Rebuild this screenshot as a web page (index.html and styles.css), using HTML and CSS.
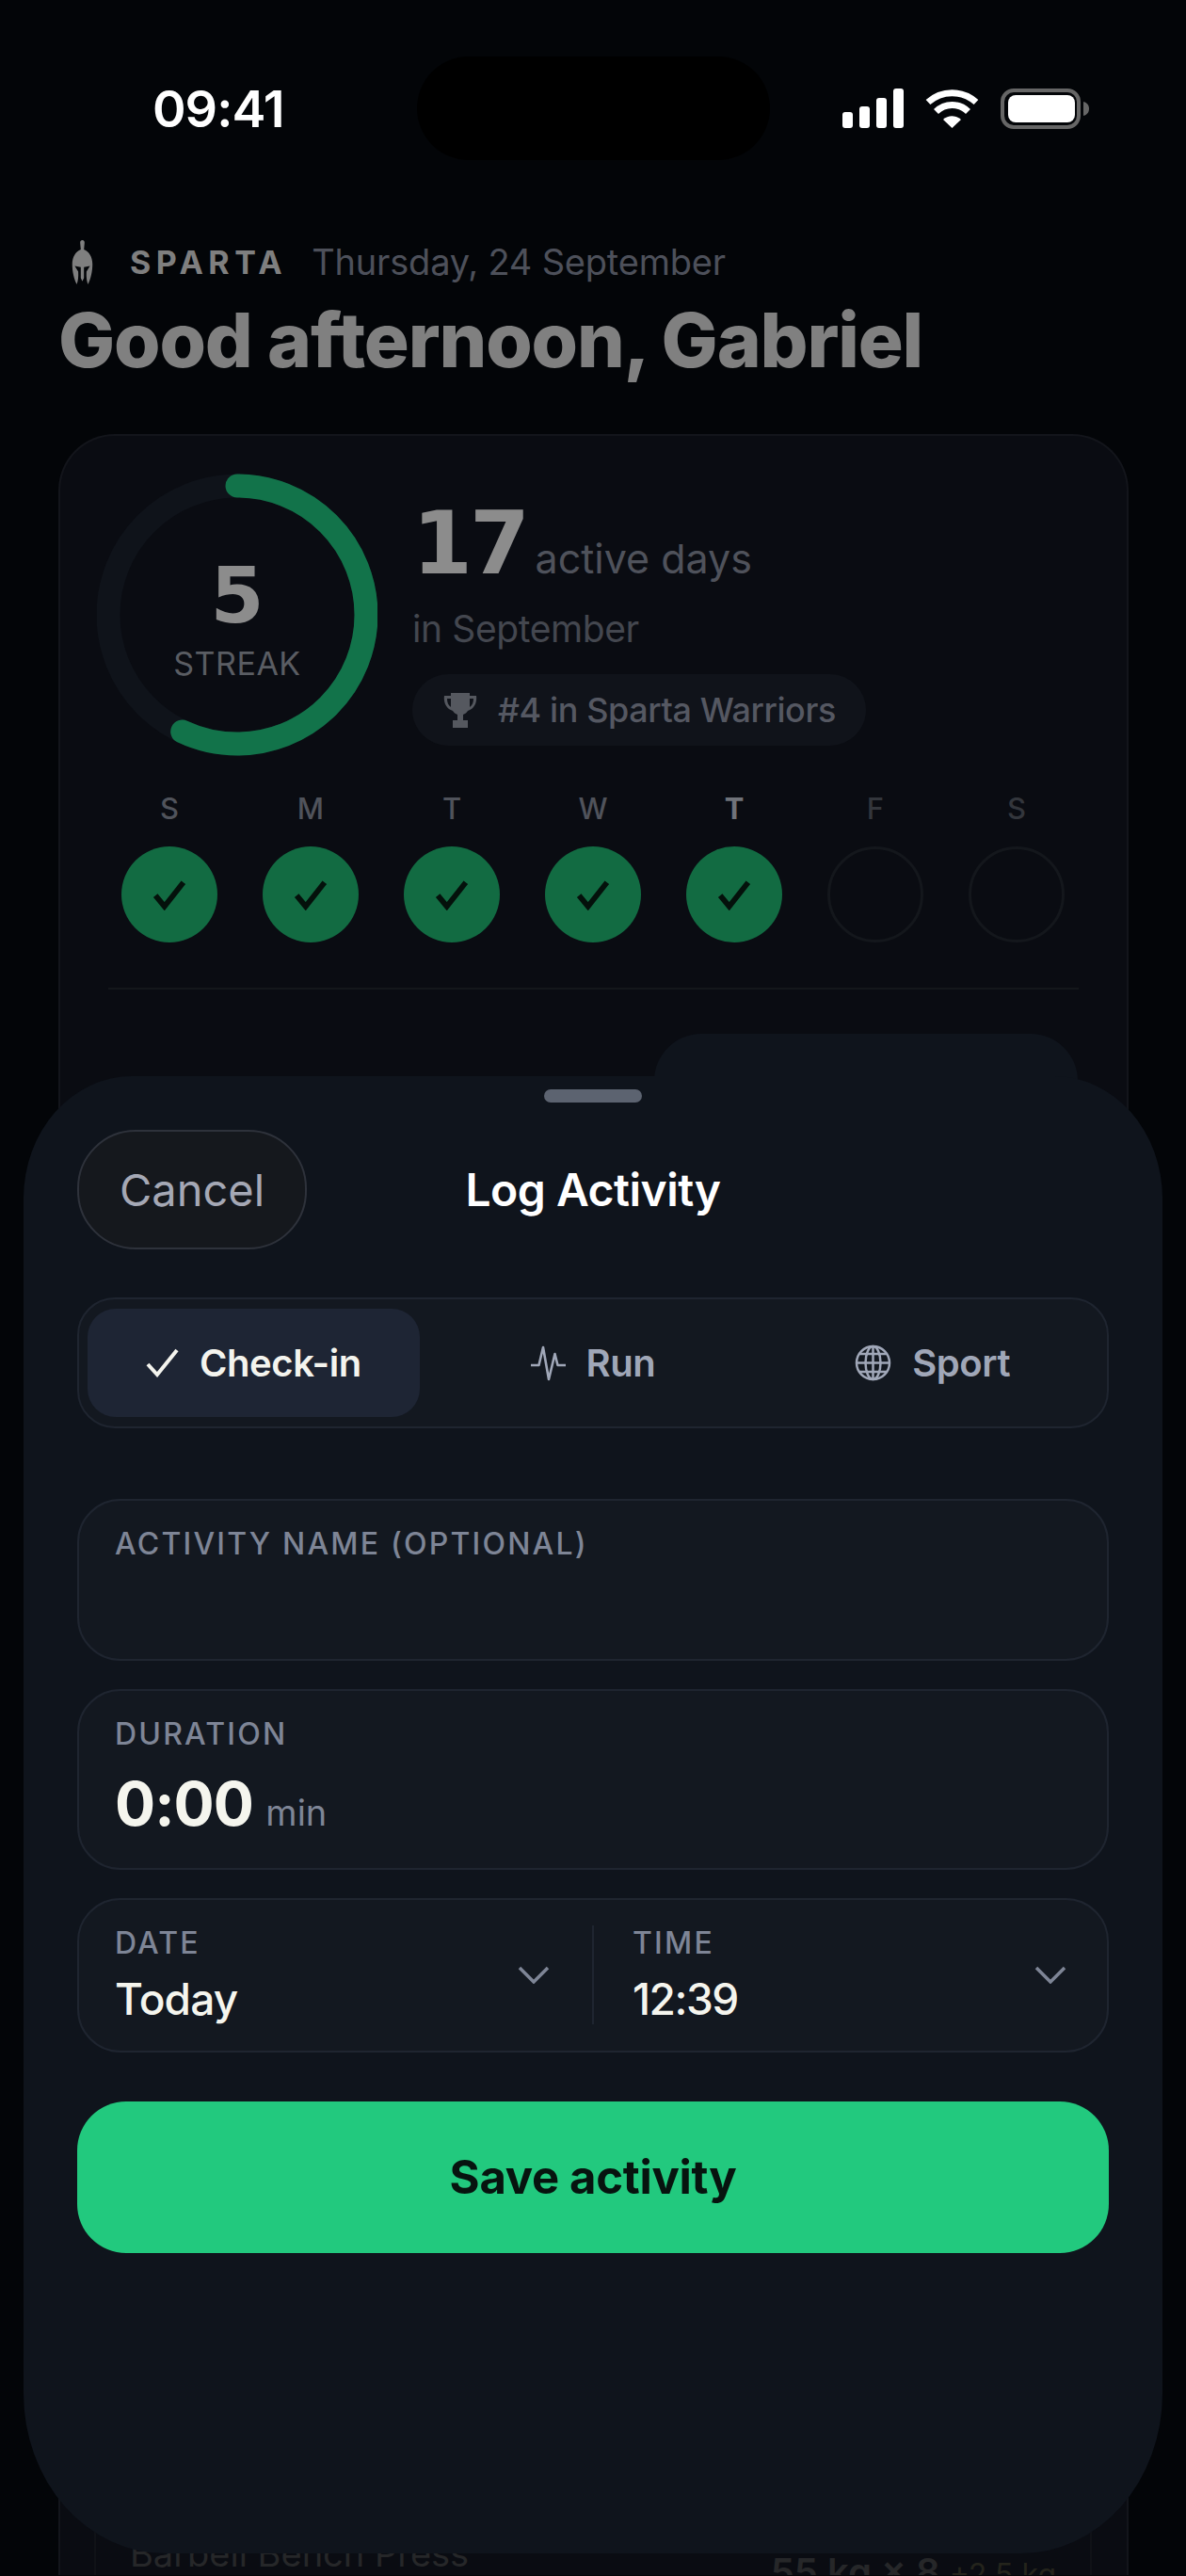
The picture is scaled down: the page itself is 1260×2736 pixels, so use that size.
FILE: index.html
```html
<!DOCTYPE html>
<html>
<head>
<title>Sparta</title>
<link rel="stylesheet" href="styles.css">
</head>
<body>

<div class="statusbar">
  <div class="time">09:41</div>
  <div class="island"></div>
  <div class="status-icons">
    <svg class="signal" width="65" height="42" viewBox="0 0 65 42" fill="#fff">
      <rect x="0" y="25" width="11" height="17" rx="3"/>
      <rect x="18" y="19" width="11" height="23" rx="3"/>
      <rect x="36" y="10" width="11" height="32" rx="3"/>
      <rect x="54" y="0" width="11" height="42" rx="3"/>
    </svg>
    <svg class="wifi" width="57" height="42" viewBox="0 0 57 42" fill="none" stroke="#fff" stroke-width="7">
      <path d="M3 14.5A38 38 0 0 1 54 14.5"/>
      <path d="M11.5 24.5A24 24 0 0 1 45.5 24.5"/>
      <path d="M19 33A14 14 0 0 1 38 33L28.5 42Z" fill="#fff" stroke="none"/>
    </svg>
    <svg class="battery" width="94" height="43" viewBox="0 0 94 43">
      <rect x="2" y="2" width="81" height="39" rx="12" fill="none" stroke="#666" stroke-width="4"/>
      <rect x="8" y="7" width="71" height="29" rx="8" fill="#fff"/>
      <path d="M88 14c4 1 6 4 6 7.500s-2 6.500-6 7.500z" fill="#666"/>
    </svg>
  </div>
</div>

<div class="header">
  <div class="brand-row">
    <svg class="helmet" width="23" height="47" viewBox="0 0 64 140" fill="#7f7f7f">
      <path d="M32 0C36 0 39 3 39 8L37 30C53 36 64 54 64 76C64 100 58 124 50 140C46 132 44 118 45 100L56 82L37 86L37 120L32 130L27 120L27 86L8 82L19 100C20 118 18 132 14 140C6 124 0 100 0 76C0 54 11 36 27 30L25 8C25 3 28 0 32 0Z"/>
    </svg>
    <span class="brand">SPARTA</span>
    <span class="date">Thursday, 24 September</span>
  </div>
  <h1>Good afternoon, Gabriel</h1>
</div>

<div class="card">
  <div class="stats">
    <div class="ring">
      <svg width="298" height="300" viewBox="0 0 298 300" fill="none" stroke-width="25">
        <circle cx="149" cy="150" r="137" stroke="#0f131a"/>
        <circle cx="149" cy="150" r="137" stroke="#12734a" stroke-linecap="round" pathLength="100" stroke-dasharray="57 100" transform="rotate(-90 149 150)"/>
      </svg>
      <div class="ring-text">
        <div class="streak-num">5</div>
        <div class="streak-label">STREAK</div>
      </div>
    </div>
    <div class="stat-text">
      <div class="active"><b>17</b> <span>active days</span></div>
      <div class="month">in September</div>
      <div class="rank">
        <svg width="36" height="37" viewBox="0 0 36 37" fill="#55585f">
          <path d="M8 0h20v3h7c1 7-2 14-9 16-1 2-3 3-5 4v6h5v8H10v-8h5v-6c-2-1-4-2-5-4C3 17 0 10 1 3h7zM4 6c0 4 1 7 4 9V6zm28 0h-4v9c3-2 4-5 4-9z" fill-rule="evenodd"/>
        </svg>
        #4 in Sparta Warriors
      </div>
    </div>
  </div>

  <div class="days">
    <div class="day"><span>S</span><div class="dot done"><svg width="36" height="34" viewBox="0 0 34 32"><path d="M3 17L12 28L31 4"/></svg></div></div>
    <div class="day"><span>M</span><div class="dot done"><svg width="36" height="34" viewBox="0 0 34 32"><path d="M3 17L12 28L31 4"/></svg></div></div>
    <div class="day"><span>T</span><div class="dot done"><svg width="36" height="34" viewBox="0 0 34 32"><path d="M3 17L12 28L31 4"/></svg></div></div>
    <div class="day"><span>W</span><div class="dot done"><svg width="36" height="34" viewBox="0 0 34 32"><path d="M3 17L12 28L31 4"/></svg></div></div>
    <div class="day today"><span>T</span><div class="dot done"><svg width="36" height="34" viewBox="0 0 34 32"><path d="M3 17L12 28L31 4"/></svg></div></div>
    <div class="day later"><span>F</span><div class="dot"></div></div>
    <div class="day later"><span>S</span><div class="dot"></div></div>
  </div>

  <div class="divider"></div>

  <div class="lift">
    <span class="lift-name">Barbell Bench Press</span>
    <span class="lift-value">55 kg × 8 <small>+2.5 kg</small></span>
  </div>
</div>

<div class="peek"></div>

<div class="sheet">
  <div class="handle"></div>

  <div class="sheet-head">
    <div class="cancel">Cancel</div>
    <div class="sheet-title">Log Activity</div>
  </div>

  <div class="segments">
    <div class="segment active">
      <svg width="35" height="31" viewBox="0 0 35 31" fill="none" stroke="#f4f4ee" stroke-width="4"><path d="M2 17L12 28L33 2"/></svg>
      Check-in
    </div>
    <div class="segment">
      <svg width="37" height="38" viewBox="0 0 37 38" fill="none" stroke="#a0a7b8" stroke-width="2.600" stroke-linejoin="round"><path d="M0 21H8.500L13 2L19 36L25.500 9L28.500 21H37"/></svg>
      Run
    </div>
    <div class="segment">
      <svg width="39" height="39" viewBox="0 0 39 39" fill="none" stroke="#a0a7b8" stroke-width="2.500"><circle cx="19.500" cy="19.500" r="17.500"/><ellipse cx="19.500" cy="19.500" rx="8" ry="17.500"/><path d="M19.500 2V37M2 19.500H37M5 10H34M5 29H34"/></svg>
      Sport
    </div>
  </div>

  <div class="field field-name">
    <div class="label">ACTIVITY NAME (OPTIONAL)</div>
  </div>

  <div class="field field-duration">
    <div class="label">DURATION</div>
    <div class="duration"><b>0:00</b> <span>min</span></div>
  </div>

  <div class="field field-when">
    <div class="when">
      <div>
        <div class="label">DATE</div>
        <div class="when-value">Today</div>
      </div>
      <svg class="chevron" width="34" height="19" viewBox="0 0 34 19"><path d="M2 2L17 17L32 2"/></svg>
    </div>
    <div class="when when-time">
      <div>
        <div class="label">TIME</div>
        <div class="when-value">12:39</div>
      </div>
      <svg class="chevron" width="34" height="19" viewBox="0 0 34 19"><path d="M2 2L17 17L32 2"/></svg>
    </div>
  </div>

  <div class="save">Save activity</div>
</div>

</body>
</html>
```

FILE: styles.css
```css
*{
box-sizing:border-box;
}

body{
margin:0;
width:1260px;
height:2736px;
overflow:hidden;
position:relative;
background:#030508;
font-family:Inter,"Liberation Sans",sans-serif;
color:white;
}

/* status bar */

.statusbar{
display:flex;
align-items:center;
height:110px;
margin-top:60px;
padding-left:162px;
}

.time{
width:281px;
font-size:54px;
font-weight:600;
letter-spacing:-1px;
}

.island{
width:375px;
height:110px;
border-radius:55px;
background:#000;
}

.status-icons{
display:flex;
align-items:flex-start;
gap:23px;
margin-left:77px;
}

/* header */

.header{
padding-left:62px;
}

.brand-row{
display:flex;
align-items:center;
height:50px;
margin-top:83px;
padding-left:14px;
}

.brand{
margin-left:39px;
font-size:34px;
font-weight:700;
letter-spacing:5.500px;
color:#7f7f7f;
}

.date{
margin-left:26px;
font-size:38px;
letter-spacing:-.2px;
color:#4d505a;
}

h1{
margin:12px 0 0;
font-size:80px;
line-height:92px;
font-weight:800;
letter-spacing:-1.150px;
color:#808080;
}

/* card behind the sheet */

.card{
width:1137px;
height:2274px;
margin:54px 0 0 62px;
padding:40px 41px 0 39px;
overflow:hidden;
border:2px solid #13151b;
border-bottom:none;
border-radius:60px 60px 0 0;
background:#0a0c12;
}

.stats{
display:flex;
gap:37px;
}

.ring{
position:relative;
width:298px;
height:300px;
}

.ring-text{
position:absolute;
inset:0;
display:flex;
flex-direction:column;
align-items:center;
justify-content:center;
padding-top:6px;
}

.streak-num{
font-family:"DejaVu Sans",sans-serif;
font-size:82px;
line-height:92px;
font-weight:700;
color:#8c8c8c;
}

.streak-label{
margin-top:6px;
font-size:34px;
line-height:40px;
letter-spacing:.5px;
color:#5a5d63;
}

.stat-text{
padding-top:25px;
}

.active{
height:100px;
white-space:nowrap;
}

.active b{
font-family:"DejaVu Sans",sans-serif;
font-size:92px;
line-height:100px;
letter-spacing:-3px;
color:#8c8c8c;
}

.active span{
margin-left:4px;
font-size:43px;
color:#4f525b;
}

.month{
margin-top:15px;
font-size:39px;
line-height:50px;
letter-spacing:-.4px;
color:#44474f;
}

.rank{
display:inline-flex;
align-items:center;
gap:22px;
height:76px;
margin-top:23px;
padding:0 32px 0 33px;
border-radius:38px;
background:#10131a;
font-size:36px;
font-weight:500;
letter-spacing:-.4px;
color:#555862;
}

.days{
display:grid;
grid-template-columns:repeat(7,150px);
margin:36px 0 0 2px;
}

.day{
display:flex;
flex-direction:column;
align-items:center;
gap:20px;
}

.day span{
font-size:31px;
line-height:40px;
font-weight:500;
color:#50535b;
}

.day.today span{
font-weight:700;
color:#70737a;
}

.day.later span{
color:#33363c;
}

.dot{
display:flex;
align-items:center;
justify-content:center;
width:102px;
height:102px;
border:3px solid #14171c;
border-radius:50%;
}

.dot.done{
border:none;
background:#126b42;
}

.dot path{
fill:none;
stroke:#04110b;
stroke-width:5.500;
}

.divider{
height:2px;
margin:48px 10px 0 12px;
background:#14171b;
}

.lift{
display:flex;
justify-content:space-between;
align-items:flex-start;
width:1060px;
height:62px;
margin:1622px 0 0 -3px;
padding:0 36px;
border:2px solid #101217;
border-width:0 2px;
color:#262729;
}

.lift-name{
padding-top:16px;
font-size:38px;
}

.lift-value{
padding-top:34px;
font-size:40px;
font-weight:600;
}

.lift-value small{
font-size:32px;
font-weight:400;
color:#24241c;
}

/* log activity sheet */

.peek{
position:absolute;
left:695px;
top:1098px;
width:450px;
height:100px;
border-radius:50px;
background:#0f141c;
}

.sheet{
position:absolute;
left:25px;
top:1143px;
width:1210px;
height:1569px;
padding:14px 57px 0;
border-radius:115px 115px 150px 150px / 130px 130px 170px 170px;
background:#0f141c;
}

.handle{
width:104px;
height:14px;
margin:0 auto;
border-radius:7px;
background:#5c6370;
}

.sheet-head{
display:grid;
grid-template-columns:1fr auto 1fr;
align-items:center;
margin-top:29px;
}

.cancel{
display:flex;
align-items:center;
justify-content:center;
width:244px;
height:127px;
border:2px solid #2e323b;
border-radius:62px;
background:#15181d;
font-size:47px;
color:#a5a8b5;
}

.sheet-title{
grid-column:2;
font-size:48px;
font-weight:600;
letter-spacing:-.5px;
}

.segments{
display:grid;
grid-template-columns:repeat(3,1fr);
gap:8px;
align-items:center;
height:139px;
margin-top:51px;
padding:0 9px;
border:2px solid #1f2530;
border-radius:40px;
background:#131820;
}

.segment{
display:flex;
align-items:center;
justify-content:center;
gap:22px;
height:115px;
border-radius:30px;
font-size:40px;
font-weight:600;
letter-spacing:-.4px;
color:#a0a7b8;
}

.segment.active{
background:#1e2534;
color:#f4f4ee;
}

.field{
margin-top:30px;
padding:27px 38px 0;
border:2px solid #1f2530;
border-radius:46px;
background:#131820;
}

.field-name{
height:172px;
margin-top:75px;
}

.field-duration{
height:192px;
}

.label{
font-size:32px;
line-height:38px;
font-weight:500;
letter-spacing:2.200px;
color:#7e8596;
}

.duration{
margin-top:17px;
}

.duration b{
font-size:64px;
line-height:76px;
letter-spacing:-1px;
color:#f5f5ee;
}

.duration span{
margin-left:9px;
font-size:38px;
color:#7e8596;
}

.field-when{
display:flex;
height:164px;
padding:27px 0 0;
}

.when{
display:flex;
justify-content:space-between;
width:547px;
height:105px;
padding:0 45px 0 38px;
border-right:2px solid #1f2530;
}

.when-time{
flex:1;
padding:0 43px 0 41px;
border-right:none;
}

.when-value{
margin-top:12px;
font-size:46px;
line-height:56px;
font-weight:500;
letter-spacing:-.8px;
color:#f5f5ee;
}

.when-time .when-value{
letter-spacing:-1.500px;
}

.chevron{
margin-top:43px;
}

.chevron path{
fill:none;
stroke:#7e8596;
stroke-width:3.500;
}

.save{
display:flex;
align-items:center;
justify-content:center;
height:161px;
margin-top:52px;
border-radius:52px;
background:#22c97e;
font-size:49px;
font-weight:700;
letter-spacing:-.3px;
color:#07140f;
}
```
